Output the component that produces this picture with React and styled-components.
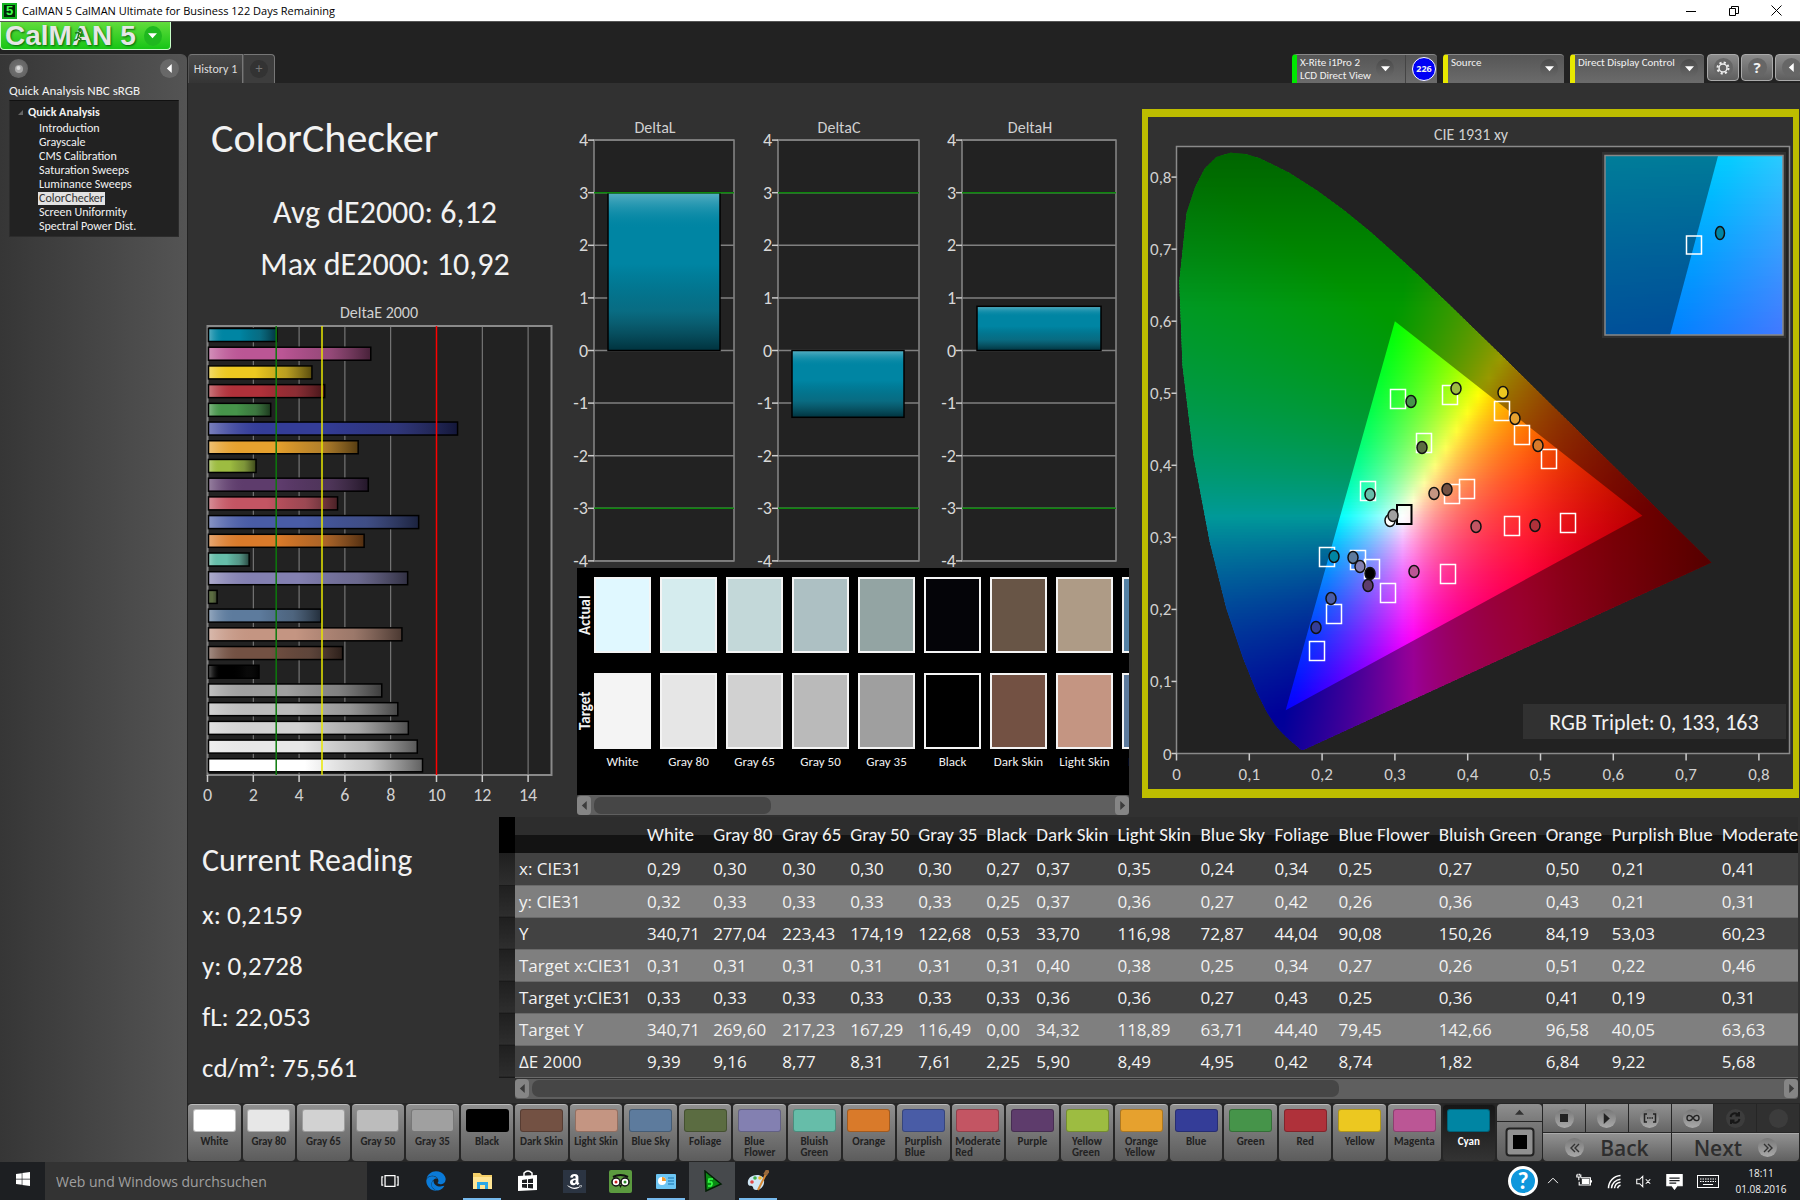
import styled, { createGlobalStyle } from 'styled-components';
import { FaEdge, FaAmazon, FaTripadvisor, FaWindows } from 'react-icons/fa';

const GlobalStyle = createGlobalStyle`
  * {
    box-sizing: border-box;
  }
  body {
    margin: 0;
    background: #222;
    color: #f2f2f2;
    font-family: Carlito, Lato, sans-serif;
  }
  button, select, input {
    font-family: inherit;
    padding: 0;
    border: 0;
    color: inherit;
  }
  h1, h2, p, ul {
    margin: 0;
    padding: 0;
  }
  text {
    font-family: Carlito, Lato, sans-serif;
  }
`;

const COLORS = [
  { name: 'White', color: '#ffffff', actual: '#e0f8ff', target: '#f4f4f4', de: 9.39 },
  { name: 'Gray 80', color: '#e7e7e7', actual: '#d5ecee', target: '#e6e6e6', de: 9.16 },
  { name: 'Gray 65', color: '#d2d2d2', actual: '#c3d8d9', target: '#d1d1d1', de: 8.77 },
  { name: 'Gray 50', color: '#bcbcbc', actual: '#adc0c3', target: '#bababa', de: 8.31 },
  { name: 'Gray 35', color: '#a0a0a0', actual: '#93a4a3', target: '#9f9f9f', de: 7.61 },
  { name: 'Black', color: '#000000', actual: '#040408', target: '#000000', de: 2.25 },
  { name: 'Dark Skin', color: '#735143', actual: '#685546', target: '#735143', de: 5.9 },
  { name: 'Light Skin', color: '#c49582', actual: '#ae9b86', target: '#c49582', de: 8.49 },
  { name: 'Blue Sky', color: '#5d7b9d', actual: '#5582a5', target: '#5d7b9d', de: 4.95 },
  { name: 'Foliage', color: '#5b6c41', de: 0.42 },
  { name: 'Blue Flower', color: '#8380b1', de: 8.74 },
  { name: 'Bluish Green', color: '#66bda9', de: 1.82 },
  { name: 'Orange', color: '#d97a2a', de: 6.84 },
  { name: 'Purplish Blue', color: '#495ca6', de: 9.22 },
  { name: 'Moderate Red', color: '#c35563', de: 5.68 },
  { name: 'Purple', color: '#5e3c6c', de: 7.02 },
  { name: 'Yellow Green', color: '#9dbc41', de: 2.12 },
  { name: 'Orange Yellow', color: '#e6a12e', de: 6.58 },
  { name: 'Blue', color: '#343d98', de: 10.92 },
  { name: 'Green', color: '#46944a', de: 2.76 },
  { name: 'Red', color: '#af313a', de: 5.12 },
  { name: 'Yellow', color: '#ecc820', de: 4.56 },
  { name: 'Magenta', color: '#bb5695', de: 7.13 },
  { name: 'Cyan', color: '#0085a3', de: 3.03 },
];

const colorOf = name => COLORS.find(c => c.name === name).color;

const Page = styled.div`
  min-height: 100vh;
  display: flex;
  flex-direction: column;
  overflow: hidden;
`;

/* ---------- title bar ---------- */

const TitleBar = styled.header`
  height: 22px;
  display: flex;
  align-items: center;
  background: #fff;
  border-bottom: 1px solid #555;
  color: #000;
  font-family: 'Open Sans', sans-serif;
  font-size: 11px;
`;
const AppBadge = styled.span`
  width: 15px;
  height: 16px;
  margin: 0 5px 0 2px;
  border: 2px solid #12b321;
  background: #022806;
  color: #3dff4c;
  font: bold 13px/12px 'Liberation Sans', sans-serif;
  text-align: center;
`;
const WindowButtons = styled.div`
  margin-left: auto;
  padding-right: 2px;
  display: flex;
`;
const WindowButton = styled.button`
  width: 43px;
  height: 20px;
  background: none;
`;

/* ---------- frame ---------- */

const Body = styled.div`
  flex: 1;
  display: grid;
  grid-template-columns: 187px minmax(0, 1fr);
`;
const LeftColumn = styled.div`
  display: flex;
  flex-direction: column;
`;
const Logo = styled.button`
  position: relative;
  width: 171px;
  height: 28px;
  margin-bottom: 4px;
  display: flex;
  align-items: center;
  padding-left: 4px;
  border: 1px solid #c8ffc8;
  border-top: 0;
  border-radius: 0 0 4px 4px;
  background: linear-gradient(#62dc3c, #16c516);
  color: #e6e6e6;
  font: bold 28px/24px 'Liberation Sans', sans-serif;
  text-shadow: 1px 1px 2px #06640a;
`;
const LogoDigit = styled.span`
  margin-left: 8px;
`;
const Runner = styled.svg`
  position: absolute;
  left: 72px;
  top: 6px;
`;
const LogoArrow = styled.span`
  width: 18px;
  height: 20px;
  margin-left: 8px;
  border-radius: 50%;
  background: #1fb81f;
  display: grid;
  place-items: center;
`;

const Sidebar = styled.aside`
  flex: 1;
  padding: 4px 8px 0 9px;
  border-top: 1px solid #555;
  border-radius: 0 6px 0 0;
  background: linear-gradient(90deg, #363636, #545454);
`;
const SidebarTop = styled.div`
  display: flex;
  justify-content: space-between;
`;
const RoundButton = styled.button`
  width: 19px;
  height: 19px;
  flex: none;
  display: grid;
  place-items: center;
  border-radius: 50%;
  background: ${p => (p.$soft ? '#686868' : 'radial-gradient(#777, #5b5b5b)')};
`;
const SidebarTitle = styled.h2`
  margin-top: 4px;
  font-size: 13px;
  font-weight: 400;
  line-height: 18px;
`;
const Tree = styled.nav`
  min-height: 137px;
  padding: 4px 0 4px 8px;
  background: #222;
  border: 1px solid #2c2c2c;
  border-top-color: #111;
`;
const TreeRoot = styled.div`
  display: flex;
  align-items: center;
  gap: 5px;
  font-size: 12px;
  font-weight: 700;
  line-height: 15px;
`;
const TreeList = styled.ul`
  margin-left: 20px;
  list-style: none;
`;
const TreeLink = styled.a`
  display: inline-block;
  padding: 0 1px;
  font-size: 12px;
  line-height: 13px;
  text-decoration: none;
  background: ${p => (p.$active ? '#e2e2e2' : 'none')};
  color: ${p => (p.$active ? '#333' : '#f2f2f2')};
`;
const TreeItem = styled.li`
  height: 14px;
  line-height: 13px;
`;

const MainColumn = styled.div`
  display: flex;
  flex-direction: column;
  border-left: 1px solid #222;
`;
const TopBar = styled.div`
  height: 61px;
  display: flex;
  align-items: flex-end;
`;
const Tab = styled.button`
  height: 29px;
  width: ${p => (p.$small ? 32 : 55)}px;
  border: 1px solid #777;
  border-bottom: 0;
  border-left-color: #555;
  border-radius: ${p => (p.$small ? '0 4px 0 0' : '4px 0 0 0')};
  background: ${p => (p.$small ? '#3d3d3d' : 'linear-gradient(#4a4a4a, #353535)')};
  color: ${p => (p.$small ? '#777' : '#ddd')};
  font-size: 12px;
`;
const TabDisc = styled.span`
  display: inline-block;
  width: 18px;
  height: 18px;
  border-radius: 50%;
  background: #333;
  font-size: 14px;
  line-height: 18px;
`;
const Devices = styled.div`
  margin-left: auto;
  display: flex;
  gap: 6px;
`;
const Device = styled.div`
  width: ${p => p.$width}px;
  height: 29px;
  position: relative;
  display: flex;
  align-items: center;
  border-left: 5px solid ${p => p.$state};
  border-top: 1px solid #888;
  border-radius: 4px 4px 0 0;
  background: linear-gradient(#565656, #6b6b6b);
`;
const DeviceSelect = styled.select`
  width: 100%;
  height: 28px;
  padding: 0 24px 12px 3px;
  appearance: none;
  background: none;
  color: #f2f2f2;
  font-size: 11px;
  line-height: 14px;
`;
const DeviceText = styled.button`
  flex: 1;
  padding-left: 3px;
  background: none;
  font-size: 11px;
  line-height: 13px;
  text-align: left;
  white-space: nowrap;
`;
const Drop = styled.span`
  position: absolute;
  right: ${p => p.$right}px;
  top: 4px;
  width: 18px;
  height: 19px;
  display: grid;
  place-items: center;
  border-radius: 50%;
  background: linear-gradient(#4a4a4a, #686868);
  pointer-events: none;
`;
const Counter = styled.span`
  width: 24px;
  height: 24px;
  margin-right: 1px;
  border: 1px solid #fff;
  border-radius: 50%;
  background: #0000f5;
  font: bold 9px/22px 'Open Sans', sans-serif;
  text-align: center;
`;
const Separator = styled.span`
  width: 1px;
  height: 28px;
  margin: 0 6px 0 0;
  background: #444;
`;
const ToolButtons = styled.div`
  display: flex;
  gap: 2px;
  margin: 0 -7px 2px 3px;
`;
const ToolButton = styled.button`
  width: 32px;
  height: 27px;
  display: grid;
  place-items: center;
  border: 1px solid #aaa;
  border-radius: 4px;
  background: linear-gradient(#8b8b8b, #5e5e5e);
`;
const ToolDisc = styled.span`
  width: 19px;
  height: 19px;
  display: grid;
  place-items: center;
  border-radius: 50%;
  background: #666;
  font: bold 15px/19px 'Open Sans', sans-serif;
`;

/* ---------- workspace ---------- */

const Workspace = styled.main`
  flex: 1;
  background: #313131;
`;
const Charts = styled.section`
  display: grid;
  grid-template-columns: 389fr 552fr 670fr;
  padding-right: 1px;
`;
const Heading = styled.h1`
  margin: 27px 0 0 23px;
  font-size: 42px;
  font-weight: 400;
  line-height: 56px;
`;
const Stats = styled.div`
  padding: 21px 0 8px 5px;
  text-align: center;
  font-size: 32px;
  line-height: 52px;
`;
const Drawing = styled.svg`
  display: block;
  width: 100%;
  overflow: visible;
`;
const MiddleColumn = styled.div`
  min-width: 0;
`;
const SwatchPanel = styled.div`
  height: 227px;
  padding-top: 9px;
  overflow: hidden;
  background: #000;
`;
const SwatchRow = styled.div`
  display: flex;
  gap: 9px;
  margin-bottom: ${p => p.$gap}px;
`;
const SideLabel = styled.span`
  width: 17px;
  margin-right: -9px;
  flex: none;
  writing-mode: vertical-rl;
  transform: rotate(180deg);
  text-align: center;
  font-size: 15px;
  font-weight: 700;
  line-height: 17px;
`;
const Swatch = styled.div`
  flex: none;
  width: 57px;
  height: 76px;
  border: 2px solid #f4f4f4;
  background: ${p => p.$color};
`;
const SwatchName = styled.span`
  flex: none;
  width: 57px;
  font-size: 13px;
  line-height: 18px;
  text-align: center;
  white-space: nowrap;
`;
const ScrollTrack = styled.div`
  height: 20px;
  display: flex;
  align-items: center;
  justify-content: space-between;
  border-radius: 3px;
  background: #5f5f5f;
`;
const ScrollThumb = styled.div`
  width: ${p => p.$size};
  height: 17px;
  margin: 0 auto 0 3px;
  border-radius: 7px;
  background: #464646;
`;
const ScrollButton = styled.button`
  width: 14px;
  height: 19px;
  display: grid;
  place-items: center;
  border-radius: 4px;
  background: #858585;
`;
const CiePanel = styled.div`
  margin: 26px 0 0 13px;
  align-self: start;
  border: solid #bdbd00;
  border-width: 8px 6px 9px;
`;

const Readings = styled.section`
  display: flex;
  margin-top: 2px;
  padding-right: 2px;
`;
const Current = styled.div`
  width: 311px;
  flex: none;
  padding: 16px 0 0 14px;
`;
const CurrentTitle = styled.h2`
  font-size: 32px;
  font-weight: 400;
  line-height: 56px;
`;
const CurrentLine = styled.p`
  font-size: 27px;
  line-height: 51px;
`;
const TableArea = styled.div`
  flex: 1;
  min-width: 0;
  overflow: hidden;
`;
const DataTable = styled.table`
  width: 100%;
  table-layout: fixed;
  border-collapse: collapse;
  font-family: 'Open Sans', sans-serif;
  font-size: 17px;
`;
const HeadCell = styled.th`
  height: 36px;
  padding: 0 0 0 4px;
  overflow: hidden;
  background: linear-gradient(#2d2d2d 50%, #131313 50%);
  font: 400 19px/24px Carlito, Lato, sans-serif;
  text-align: left;
  white-space: nowrap;
`;
const Corner = styled.th`
  background: #000;
`;
const Grip = styled.td`
  padding: 0;
  background: linear-gradient(#1f1f1f, #2e2e2e);
  border-bottom: 1px solid #1a1a1a;
`;
const Row = styled.tr`
  height: 32px;
  background: ${p => (p.$alt ? '#7f7f7f' : '#424242')};
`;
const Cell = styled.td`
  padding: 0 0 0 4px;
  border-bottom: 1px solid #6a6a6a;
  font-weight: 400;
  text-align: left;
  white-space: nowrap;
`;
const TableScroll = styled.div`
  margin: 1px 0 0 16px;
`;

/* ---------- bottom bar ---------- */

const BottomBar = styled.footer`
  height: 59px;
  padding: 1px 1px 1px 0;
  display: flex;
  gap: 2px;
  background: #262626;
`;
const PatchButton = styled.button`
  flex: 1 1 0;
  min-width: 0;
  height: 57px;
  padding-top: 4px;
  display: flex;
  flex-direction: column;
  align-items: center;
  gap: 4px;
  border-top: 1px solid ${p => (p.$active ? '#222' : '#bbb')};
  border-radius: 4px;
  background: ${p => (p.$active ? 'linear-gradient(#161616, #333)' : 'linear-gradient(#8f8f8f, #5c5c5c)')};
  color: ${p => (p.$active ? '#fff' : '#222')};
  font-size: 11px;
  font-weight: 700;
  line-height: 11px;
  text-align: left;
`;
const PatchColor = styled.span`
  width: 43px;
  height: 23px;
  flex: none;
  border-radius: 3px;
  border: 1px solid rgba(0, 0, 0, 0.25);
  background: ${p => p.$color};
`;
const PatchName = styled.span`
  width: ${p => (p.$wrap ? 'min-content' : 'auto')};
  white-space: ${p => (p.$wrap ? 'normal' : 'nowrap')};
`;
const WindowControl = styled.div`
  width: 45px;
  flex: none;
  display: flex;
  flex-direction: column;
  gap: 1px;
`;
const UpButton = styled.button`
  height: 17px;
  display: grid;
  place-items: center;
  border-radius: 4px 4px 0 0;
  background: linear-gradient(#8f8f8f, #7a7a7a);
`;
const PatternButton = styled.button`
  flex: 1;
  display: grid;
  place-items: center;
  border-radius: 0 0 4px 4px;
  background: linear-gradient(#7a7a7a, #5c5c5c);
`;
const Transport = styled.div`
  width: 256px;
  flex: none;
  margin-left: -1px;
  display: grid;
  grid-template-columns: repeat(6, 1fr);
  grid-template-rows: 28px 28px;
  gap: 1px;
`;
const TransportButton = styled.button`
  display: grid;
  place-items: center;
  background: ${p => (p.$off ? '#303030' : 'linear-gradient(#919191, #656565)')};
`;
const Disc = styled.span`
  width: 19px;
  height: 19px;
  display: grid;
  place-items: center;
  border-radius: 50%;
  background: ${p => (p.$off ? '#3c3c3c' : 'linear-gradient(#777, #aaa)')};
`;
const StepButton = styled.button`
  grid-column: span 3;
  display: flex;
  align-items: center;
  justify-content: center;
  gap: 16px;
  border-top: 1px solid #aaa;
  border-radius: ${p => (p.$right ? '0 0 4px 0' : '0 0 0 4px')};
  background: linear-gradient(#919191, #606060);
  color: #2e2e2e;
  font: 600 21px/24px 'Open Sans', sans-serif;
`;

/* ---------- task bar ---------- */

const TaskBar = styled.div`
  height: 38px;
  display: flex;
  align-items: center;
  background: #1d1f22;
  font-family: 'Open Sans', sans-serif;
`;
const StartButton = styled.button`
  width: 45px;
  height: 38px;
  background: none;
  color: #fff;
`;
const Search = styled.input`
  width: 322px;
  height: 38px;
  padding-left: 11px;
  background: #333;
  font-size: 14px;
  &::placeholder {
    color: #a0a0a0;
    opacity: 1;
  }
`;
const TaskButton = styled.button`
  width: 46px;
  height: 38px;
  display: grid;
  place-items: center;
  background: ${p => (p.$active ? '#46494c' : 'none')};
  position: relative;
  &::after {
    content: '';
    display: ${p => (p.$running ? 'block' : 'none')};
    position: absolute;
    left: 4px;
    right: 4px;
    bottom: 0;
    height: 2px;
    background: #76b9ed;
  }
`;
const Tray = styled.div`
  margin-left: auto;
  display: flex;
  align-items: center;
`;
const TrayButton = styled.button`
  width: ${p => p.$width || 30}px;
  height: 38px;
  display: grid;
  place-items: center;
  background: none;
`;
const Clock = styled.div`
  width: 70px;
  margin-right: 4px;
  font-size: 10px;
  line-height: 16px;
  text-align: center;
`;

const Arrow = ({ dir = 'down', color = '#fff', size = 9 }) => {
  const turn = { down: 0, left: 90, up: 180, right: 270 }[dir];
  return (
    <svg width={size} height={size} viewBox="0 0 10 10" aria-hidden="true">
      <path d="M0 2.5H10L5 8Z" fill={color} transform={`rotate(${turn} 5 5)`} />
    </svg>
  );
};

/* ---------- charts ---------- */

const BarFill = ({ id, color, vertical }) => (
  <linearGradient id={`${id}-base`} x2={vertical ? 0 : 1} y2={vertical ? 1 : 0}>
    <stop offset="0" stopColor="#fff" stopOpacity="0.35" />
    <stop offset="0.23" stopColor={color} stopOpacity="0" />
    <stop offset="0.45" stopColor="#000" stopOpacity="0" />
    <stop offset="0.75" stopColor="#222" stopOpacity="0.25" />
    <stop offset="1" stopColor="#000" stopOpacity="0.62" />
  </linearGradient>
);

const DeltaEChart = () => {
  const left = 19.5;
  const unit = 22.9;
  const top = 27;
  const bottom = 476;
  const pitch = (bottom - top) / COLORS.length;
  return (
    <Drawing viewBox="0 0 389 510" role="img" aria-label="DeltaE 2000">
      <defs>
        {COLORS.map((c, i) => (
          <BarFill key={c.name} id={`de${i}`} color={c.color} />
        ))}
      </defs>
      <text x="191" y="19" fontSize="16" fill="#d0d0d0" textAnchor="middle">DeltaE 2000</text>
      <rect x={left} y={top} width="344" height={bottom - top} fill="#222" stroke="#8a8a8a" strokeWidth="2" />
      {[0, 2, 4, 6, 8, 10, 12, 14].map(v => (
        <g key={v}>
          <line x1={left + v * unit} x2={left + v * unit} y1={top} y2={bottom} stroke="#858585" />
          <line x1={left + v * unit} x2={left + v * unit} y1={bottom} y2={bottom + 7} stroke="#ccc" strokeWidth="1.5" />
          <text x={left + v * unit} y="502" fontSize="18" fill="#d0d0d0" textAnchor="middle">{v}</text>
        </g>
      ))}
      {[...COLORS].reverse().map((c, i) => {
        const box = { x: left + 1, y: top + i * pitch + 2.5, width: c.de * unit - 1, height: 13 };
        return (
          <g key={c.name}>
            <rect {...box} fill={c.color} />
            <rect {...box} fill={`url(#de${COLORS.length - 1 - i}-base)`} stroke="#000" strokeWidth="1.5" />
          </g>
        );
      })}
      <line x1={left + 3 * unit} x2={left + 3 * unit} y1={top} y2={bottom} stroke="#0c7a0c" strokeWidth="1.5" />
      <line x1={left + 5 * unit} x2={left + 5 * unit} y1={top} y2={bottom} stroke="#e8e800" strokeWidth="1.5" />
      <line x1={left + 10 * unit} x2={left + 10 * unit} y1={top} y2={bottom} stroke="#f00" strokeWidth="1.5" />
    </Drawing>
  );
};

const DELTAS = [
  { name: 'DeltaL', x: 17, width: 140, title: 78, bar: [31, 112], value: 3 },
  { name: 'DeltaC', x: 201, width: 141, title: 262, bar: [215, 112], value: -1.27 },
  { name: 'DeltaH', x: 385, width: 154, title: 453, bar: [400, 124], value: 0.84 },
];

const DeltaCharts = () => {
  const zero = 267.5;
  const unit = 52.6;
  return (
    <Drawing viewBox="0 0 552 485" role="img" aria-label="DeltaL, DeltaC and DeltaH">
      <defs>
        <BarFill id="delta" color="#0085a3" vertical />
      </defs>
      {DELTAS.map(d => {
        const box = {
          x: d.bar[0],
          y: d.value > 0 ? zero - d.value * unit : zero,
          width: d.bar[1],
          height: Math.abs(d.value) * unit,
        };
        return (
          <g key={d.name}>
            <text x={d.title} y="50" fontSize="16" fill="#d0d0d0" textAnchor="middle">{d.name}</text>
            <rect x={d.x} y={zero - 4 * unit} width={d.width} height={8 * unit} fill="#222" stroke="#888" strokeWidth="1.5" />
            {[4, 3, 2, 1, 0, -1, -2, -3, -4].map(v => (
              <g key={v}>
                <line x1={d.x} x2={d.x + d.width} y1={zero - v * unit} y2={zero - v * unit} stroke="#808080" strokeWidth="1.5" />
                <line x1={d.x - 6} x2={d.x} y1={zero - v * unit} y2={zero - v * unit} stroke="#ccc" strokeWidth="1.5" />
                <text x={d.x - 6} y={zero - v * unit + 6} fontSize="18" fill="#d8d8d8" textAnchor="end">{v}</text>
              </g>
            ))}
            <rect {...box} fill="#0085a3" />
            <rect {...box} fill="url(#delta-base)" stroke="#000" strokeWidth="1.5" />
            {[3, -3].map(v => (
              <line key={v} x1={d.x} x2={d.x + d.width} y1={zero - v * unit} y2={zero - v * unit} stroke="#0d870d" strokeWidth="1.5" />
            ))}
          </g>
        );
      })}
    </Drawing>
  );
};

// CIE 1931 spectral locus, 380nm to 700nm
const LOCUS = [
  [0.1741, 0.005], [0.1738, 0.0049], [0.1714, 0.0051], [0.1689, 0.0069], [0.1644, 0.0109], [0.1566, 0.0177],
  [0.151, 0.0227], [0.144, 0.0297], [0.1355, 0.0399], [0.1241, 0.0578], [0.1096, 0.0868], [0.0913, 0.1327],
  [0.0687, 0.2007], [0.0454, 0.295], [0.0235, 0.4127], [0.0082, 0.5384], [0.0039, 0.6548], [0.0139, 0.7502],
  [0.0256, 0.786], [0.0389, 0.812], [0.055, 0.828], [0.0743, 0.8338], [0.0943, 0.832], [0.1142, 0.8262],
  [0.1547, 0.8059], [0.1929, 0.7816], [0.2296, 0.7543], [0.2658, 0.7243], [0.3016, 0.6923], [0.3373, 0.6589],
  [0.3731, 0.6245], [0.4087, 0.5896], [0.4441, 0.5547], [0.4788, 0.5202], [0.5125, 0.4866], [0.5448, 0.4544],
  [0.5752, 0.4242], [0.6029, 0.3965], [0.627, 0.3725], [0.6658, 0.334], [0.6915, 0.3083], [0.714, 0.2859],
  [0.7347, 0.2653],
];
const SRGB = [[0.64, 0.33], [0.3, 0.6], [0.15, 0.06]];

const chroma = (x, y) => {
  const yy = Math.max(y, 0.001);
  const X = x / yy;
  const Z = (1 - x - yy) / yy;
  const rgb = [
    3.2406 * X - 1.5372 - 0.4986 * Z,
    -0.9689 * X + 1.8758 + 0.0415 * Z,
    0.0557 * X - 0.204 + 1.057 * Z,
  ].map(v => Math.max(v, 0));
  const max = Math.max(...rgb);
  const fade = (1 - Math.max(0, x - 0.48) * 1.75) * (1 - Math.max(0, y - 0.62) * 1.6);
  return `rgb(${rgb.map(v => Math.round((v / max) * 255 * fade)).join(',')})`;
};

// Paints a chromaticity area as thin strips, each with its own horizontal gradient
const Field = ({ id, px, py, width, height, x0, x1, y0, y1, step, stops }) => {
  const rows = Array.from({ length: Math.ceil(height / step) }, (_, i) => i);
  const cols = Array.from({ length: stops + 1 }, (_, i) => i / stops);
  return rows.map(r => {
    const y = y1 - ((r + 0.5) * step * (y1 - y0)) / height;
    return (
      <g key={r}>
        <linearGradient id={`${id}${r}`}>
          {cols.map(c => (
            <stop key={c} offset={c} stopColor={chroma(x0 + c * (x1 - x0), y)} />
          ))}
        </linearGradient>
        <rect x={px} y={py + r * step} width={width} height={Math.min(step + 1, height - r * step)} fill={`url(#${id}${r})`} />
      </g>
    );
  });
};

const TARGETS = [
  [1398, 399], [1450, 395], [1502, 411], [1522, 435], [1549, 459], [1424, 443], [1368, 491], [1452, 494],
  [1467, 489], [1512, 526], [1568, 523], [1327, 557], [1358, 560], [1372, 569], [1388, 593], [1448, 574],
  [1334, 614], [1317, 651],
];
const MEASURED = [
  ['Green', 1411, 401], ['Yellow Green', 1456, 388], ['Yellow', 1503, 392], ['Orange Yellow', 1515, 418],
  ['Orange', 1538, 445], ['Foliage', 1422, 447], ['Bluish Green', 1370, 494], ['Light Skin', 1434, 493],
  ['Dark Skin', 1447, 489], ['White', 1390, 520], ['Gray 35', 1393, 515], ['Moderate Red', 1476, 526],
  ['Red', 1535, 525], ['Cyan', 1334, 556], ['Blue Sky', 1353, 557], ['Blue Flower', 1360, 566],
  ['Purple', 1368, 585], ['Black', 1370, 573], ['Magenta', 1414, 571], ['Purplish Blue', 1331, 598],
  ['Blue', 1316, 627],
];

const CieChart = () => {
  const ox = 1176.5;
  const oy = 753.5;
  const ux = 728;
  const uy = 720.5;
  const path = pts => `M${pts.map(([x, y]) => `${(ox + x * ux).toFixed(1)} ${(oy - y * uy).toFixed(1)}`).join('L')}Z`;
  // magnified area round the selected target
  const cx = 0.2075;
  const cy = 0.27;
  const zoom = 3060;
  const inset = {
    x0: cx - 89 / zoom, x1: cx + 89 / zoom, y0: cy - 90 / zoom, y1: cy + 90 / zoom,
  };
  return (
    <Drawing viewBox="1148 117 645 672" role="img" aria-label="CIE 1931 xy">
      <defs>
        <clipPath id="locus"><path d={path(LOCUS)} /></clipPath>
      </defs>
      <text x="1471" y="140" fontSize="16" fill="#d0d0d0" textAnchor="middle">CIE 1931 xy</text>
      <rect x={ox} y="146.5" width="613" height="607" fill="#222" stroke="#8a8a8a" strokeWidth="1.5" />
      {[0, 1, 2, 3, 4, 5, 6, 7, 8].map(v => {
        const label = v ? `0,${v}` : '0';
        return (
          <g key={v}>
            <line x1={ox - 5} x2={ox} y1={oy - v * uy / 10} y2={oy - v * uy / 10} stroke="#ccc" strokeWidth="1.5" />
            <line x1={ox + v * ux / 10} x2={ox + v * ux / 10} y1={oy} y2={oy + 7} stroke="#ccc" strokeWidth="1.5" />
            <text x={ox - 5} y={oy - v * uy / 10 + 6} fontSize="17" fill="#d0d0d0" textAnchor="end">{label}</text>
            <text x={ox + v * ux / 10} y="780" fontSize="17" fill="#d0d0d0" textAnchor="middle">{label}</text>
          </g>
        );
      })}
      <g clipPath="url(#locus)">
        <Field id="cie" px={ox} py={oy - 0.84 * uy} width={0.74 * ux} height={0.84 * uy}
          x0={0} x1={0.74} y0={0} y1={0.84} step={3} stops={50} />
      </g>
      <path d={path(LOCUS) + path(SRGB)} fillRule="evenodd" fill="#000" fillOpacity="0.4" />

      <rect x="1602" y="152" width="184" height="186" fill="#313131" />
      <Field id="inset" px={1605} py={156} width={178} height={179} {...inset} step={3} stops={10} />
      <path d="M1605 156H1718L1670 335H1605Z" fillOpacity="0.4" />
      <rect x="1605" y="155.5" width="178" height="179.5" fill="none" stroke="#888" strokeWidth="1.5" />
      <rect x="1686.5" y="236" width="15" height="18" fill="none" stroke="#fff" strokeWidth="1.5" />
      <ellipse cx="1720" cy="233" rx="4.5" ry="6.5" fill="#0085a3" stroke="#111" strokeWidth="1.5" />

      {TARGETS.map(([x, y]) => (
        <rect key={`${x}-${y}`} x={x - 7.5} y={y - 9.5} width="15" height="19" fill="none" stroke="#fff" strokeWidth="1.5" />
      ))}
      <rect x="1397" y="505" width="14.5" height="19" fill="#fff" fillOpacity="0.6" stroke="#000" strokeWidth="2" />
      {MEASURED.map(([name, x, y]) => (
        <ellipse key={name} cx={x} cy={y + 0.5} rx="5" ry="6" fill={colorOf(name)} stroke="#111" strokeWidth="1.5" />
      ))}

      <rect x="1523" y="704" width="263" height="35" fill="#313131" />
      <text x="1654" y="730" fontSize="22" fill="#f2f2f2" textAnchor="middle">RGB Triplet: 0, 133, 163</text>
    </Drawing>
  );
};

/* ---------- data table ---------- */

const COLUMNS = [
  ['White', 66], ['Gray 80', 69], ['Gray 65', 68], ['Gray 50', 68], ['Gray 35', 68], ['Black', 50],
  ['Dark Skin', 81], ['Light Skin', 83], ['Blue Sky', 74], ['Foliage', 64], ['Blue Flower', 100],
  ['Bluish Green', 107], ['Orange', 66], ['Purplish Blue', 110], ['Moderate', 80],
];
const ROWS = [
  ['x: CIE31', '0,29 0,30 0,30 0,30 0,30 0,27 0,37 0,35 0,24 0,34 0,25 0,27 0,50 0,21 0,41'],
  ['y: CIE31', '0,32 0,33 0,33 0,33 0,33 0,25 0,37 0,36 0,27 0,42 0,26 0,36 0,43 0,21 0,31'],
  ['Y', '340,71 277,04 223,43 174,19 122,68 0,53 33,70 116,98 72,87 44,04 90,08 150,26 84,19 53,03 60,23'],
  ['Target x:CIE31', '0,31 0,31 0,31 0,31 0,31 0,31 0,40 0,38 0,25 0,34 0,27 0,26 0,51 0,22 0,46'],
  ['Target y:CIE31', '0,33 0,33 0,33 0,33 0,33 0,33 0,36 0,36 0,27 0,43 0,25 0,36 0,41 0,19 0,31'],
  ['Target Y', '340,71 269,60 217,23 167,29 116,49 0,00 34,32 118,89 63,71 44,40 79,45 142,66 96,58 40,05 63,63'],
  ['ΔE 2000', '9,39 9,16 8,77 8,31 7,61 2,25 5,90 8,49 4,95 0,42 8,74 1,82 6,84 9,22 5,68'],
];

const Scrollbar = ({ size }) => (
  <ScrollTrack>
    <ScrollButton aria-label="Scroll left"><Arrow dir="left" color="#3c3c3c" /></ScrollButton>
    <ScrollThumb $size={size} />
    <ScrollButton aria-label="Scroll right"><Arrow dir="right" color="#3c3c3c" /></ScrollButton>
  </ScrollTrack>
);

const ReadingsTable = () => (
  <TableArea>
    <DataTable>
      <colgroup>
        <col width="16" />
        <col width="128" />
        {COLUMNS.map(([name, width]) => <col key={name} width={width} />)}
      </colgroup>
      <thead>
        <tr>
          <Corner />
          <HeadCell />
          {COLUMNS.map(([name]) => <HeadCell key={name}>{name}</HeadCell>)}
        </tr>
      </thead>
      <tbody>
        {ROWS.map(([label, values], i) => (
          <Row key={label} $alt={i % 2 === 1}>
            <Grip />
            <Cell as="th" scope="row">{label}</Cell>
            {values.split(' ').map((v, n) => <Cell key={n}>{v}</Cell>)}
          </Row>
        ))}
      </tbody>
    </DataTable>
    <TableScroll><Scrollbar size="807px" /></TableScroll>
  </TableArea>
);

const PAGES = ['Introduction', 'Grayscale', 'CMS Calibration', 'Saturation Sweeps', 'Luminance Sweeps', 'ColorChecker', 'Screen Uniformity', 'Spectral Power Dist.'];

const Glyph = ({ children, size = 18 }) => (
  <svg width={size} height={size} viewBox="0 0 20 20" fill="none" stroke="#fff" strokeWidth="1.4" aria-hidden="true">
    {children}
  </svg>
);

export default function App() {
  return (
    <Page>
      <GlobalStyle />
      <TitleBar>
        <AppBadge>5</AppBadge>
        CalMAN 5 CalMAN Ultimate for Business 122 Days Remaining
        <WindowButtons>
          <WindowButton aria-label="Minimize">
            <svg width="10" height="10" stroke="#000"><path d="M0 5.5H10" /></svg>
          </WindowButton>
          <WindowButton aria-label="Restore">
            <svg width="10" height="10" stroke="#000" fill="none"><path d="M.5 2.5h6v7h-6zM2.5 2.5v-2h7v7h-3" /></svg>
          </WindowButton>
          <WindowButton aria-label="Close">
            <svg width="11" height="11" stroke="#000"><path d="M.5 .5l10 10M10.500 .5l-10 10" /></svg>
          </WindowButton>
        </WindowButtons>
      </TitleBar>

      <Body>
        <LeftColumn>
          <Logo aria-label="CalMAN 5 menu">
            CalMAN<LogoDigit>5</LogoDigit>
            <Runner width="12" height="15" viewBox="0 0 12 15" fill="none" stroke="#1d7d1d" strokeWidth="1.4">
              <circle cx="7" cy="2" r="1.2" fill="#1d7d1d" />
              <path d="M2 5L5.500 4.500L8 7H10.500M6 5L5 9L8 11L7 14M5 9L4 11.500L1 12.500" />
            </Runner>
            <LogoArrow><Arrow /></LogoArrow>
          </Logo>
          <Sidebar>
            <SidebarTop>
              <RoundButton aria-label="Record">
                <svg width="10" height="10"><circle cx="5" cy="5" r="4" fill="#aaa" /><circle cx="4.500" cy="4" r="2" fill="#ddd" /></svg>
              </RoundButton>
              <RoundButton $soft aria-label="Collapse"><Arrow dir="left" /></RoundButton>
            </SidebarTop>
            <SidebarTitle>Quick Analysis NBC sRGB</SidebarTitle>
            <Tree>
              <TreeRoot>
                <svg width="5" height="5"><path d="M5 0V5H0Z" fill="#666" /></svg>
                Quick Analysis
              </TreeRoot>
              <TreeList>
                {PAGES.map(page => (
                  <TreeItem key={page}>
                    <TreeLink href="#" $active={page === 'ColorChecker'}>{page}</TreeLink>
                  </TreeItem>
                ))}
              </TreeList>
            </Tree>
          </Sidebar>
        </LeftColumn>

        <MainColumn>
          <TopBar>
            <Tab>History 1</Tab>
            <Tab $small aria-label="Add history"><TabDisc>+</TabDisc></Tab>
            <Devices>
              <Device $width={145} $state="#00e800">
                <DeviceText>X-Rite i1Pro 2<br />LCD Direct View</DeviceText>
                <Drop $right={43}><Arrow /></Drop>
                <Separator />
                <Counter>226</Counter>
              </Device>
              <Device $width={121} $state="#e8e800">
                <DeviceSelect aria-label="Source"><option>Source</option></DeviceSelect>
                <Drop $right={6}><Arrow /></Drop>
              </Device>
              <Device $width={134} $state="#e8e800">
                <DeviceSelect aria-label="Display control"><option>Direct Display Control</option></DeviceSelect>
                <Drop $right={6}><Arrow /></Drop>
              </Device>
            </Devices>
            <ToolButtons>
              <ToolButton aria-label="Settings">
                <ToolDisc>
                  <svg width="14" height="14" viewBox="-7 -7 14 14" fill="none" stroke="#eee">
                    <circle r="4" strokeWidth="1.5" />
                    <circle r="5.500" strokeWidth="2" strokeDasharray="2.160 2.160" />
                  </svg>
                </ToolDisc>
              </ToolButton>
              <ToolButton aria-label="Help"><ToolDisc>?</ToolDisc></ToolButton>
              <ToolButton aria-label="Collapse panel"><ToolDisc><Arrow dir="left" /></ToolDisc></ToolButton>
            </ToolButtons>
          </TopBar>

          <Workspace>
            <Charts>
              <div>
                <Heading>ColorChecker</Heading>
                <Stats>
                  <p>Avg dE2000: 6,12</p>
                  <p>Max dE2000: 10,92</p>
                </Stats>
                <DeltaEChart />
              </div>
              <MiddleColumn>
                <DeltaCharts />
                <SwatchPanel>
                  <SwatchRow $gap={20}>
                    <SideLabel>Actual</SideLabel>
                    {COLORS.slice(0, 9).map(c => <Swatch key={c.name} $color={c.actual} />)}
                  </SwatchRow>
                  <SwatchRow $gap={4}>
                    <SideLabel>Target</SideLabel>
                    {COLORS.slice(0, 9).map(c => <Swatch key={c.name} $color={c.target} />)}
                  </SwatchRow>
                  <SwatchRow $gap={0}>
                    <SideLabel />
                    {COLORS.slice(0, 9).map(c => <SwatchName key={c.name}>{c.name}</SwatchName>)}
                  </SwatchRow>
                </SwatchPanel>
                <Scrollbar size="177px" />
              </MiddleColumn>
              <CiePanel>
                <CieChart />
              </CiePanel>
            </Charts>
            <Readings>
              <Current>
                <CurrentTitle>Current Reading</CurrentTitle>
                <CurrentLine>x: 0,2159</CurrentLine>
                <CurrentLine>y: 0,2728</CurrentLine>
                <CurrentLine>fL: 22,053</CurrentLine>
                <CurrentLine>cd/m²: 75,561</CurrentLine>
              </Current>
              <ReadingsTable />
            </Readings>
          </Workspace>

          <BottomBar>
            {COLORS.map(c => (
              <PatchButton key={c.name} $active={c.name === 'Cyan'}>
                <PatchColor $color={c.color} />
                <PatchName $wrap={c.name.length > 10}>{c.name}</PatchName>
              </PatchButton>
            ))}
            <WindowControl>
              <UpButton aria-label="More patterns"><Arrow dir="up" color="#333" /></UpButton>
              <PatternButton aria-label="Pattern window">
                <svg width="30" height="30">
                  <rect x="1.500" y="1.500" width="27" height="27" rx="3" fill="#909090" stroke="#222" strokeWidth="2" />
                  <rect x="8" y="8" width="14" height="14" fill="#000" />
                </svg>
              </PatternButton>
            </WindowControl>
            <Transport>
              <TransportButton aria-label="Stop"><Disc><svg width="8" height="8"><rect width="8" height="8" fill="#222" /></svg></Disc></TransportButton>
              <TransportButton aria-label="Play"><Disc><Arrow dir="right" color="#222" size={11} /></Disc></TransportButton>
              <TransportButton aria-label="Read series">
                <Disc>
                  <svg width="14" height="10" fill="none" stroke="#222" strokeWidth="1.5">
                    <path d="M4 1H1.500V9H4M10 1H12.500V9H10M4 5H5.500M6.300 5H7.700M8.500 5H10" />
                  </svg>
                </Disc>
              </TransportButton>
              <TransportButton aria-label="Read continuously">
                <Disc>
                  <svg width="14" height="8" fill="none" stroke="#222" strokeWidth="1.4">
                    <path d="M7 4C5 1 1 0 1 4S5 7 7 4S13 0 13 4S9 7 7 4Z" />
                  </svg>
                </Disc>
              </TransportButton>
              <TransportButton $off aria-label="Refresh">
                <Disc $off>
                  <svg width="12" height="12" fill="none" stroke="#171717" strokeWidth="2">
                    <path d="M1.500 5A4.500 4.500 0 0 1 9 2.500M10.500 7A4.500 4.500 0 0 1 3 9.500M10 0V3.500H6.500M2 12V8.500H5.500" />
                  </svg>
                </Disc>
              </TransportButton>
              <TransportButton $off aria-label="Idle"><Disc $off /></TransportButton>
              <StepButton>
                <Disc><svg width="10" height="10" fill="none" stroke="#333" strokeWidth="1.4"><path d="M5 1L1 5L5 9M9 1L5 5L9 9" /></svg></Disc>
                Back
              </StepButton>
              <StepButton $right>
                Next
                <Disc><svg width="10" height="10" fill="none" stroke="#333" strokeWidth="1.4"><path d="M1 1L5 5L1 9M5 1L9 5L5 9" /></svg></Disc>
              </StepButton>
            </Transport>
          </BottomBar>
        </MainColumn>
      </Body>

      <TaskBar>
        <StartButton aria-label="Start"><FaWindows size={16} /></StartButton>
        <Search aria-label="Search" placeholder="Web und Windows durchsuchen" />
        <TaskButton aria-label="Task view">
          <Glyph><path d="M4.500 4H15.500V16H4.500ZM2.500 5.500H1V14.500H2.500M17.500 5.500H19V14.500H17.500" /></Glyph>
        </TaskButton>
        <TaskButton aria-label="Edge"><FaEdge size={20} color="#0a7ad8" /></TaskButton>
        <TaskButton $running aria-label="Explorer">
          <svg width="21" height="18">
            <path d="M1 1H8L10 3H20V17H1Z" fill="#f5d069" />
            <path d="M1 5H20V17H1Z" fill="#ffe595" />
            <path d="M5 17V10H16V17H13V13H8V17Z" fill="#2aa8e8" />
          </svg>
        </TaskButton>
        <TaskButton aria-label="Store">
          <svg width="20" height="22">
            <path d="M6 6V3Q10-1 14 3V6" fill="none" stroke="#fff" strokeWidth="1.500" />
            <path d="M0 6L19 5V20L0 21Z" fill="#fff" />
            <path d="M4 10L9 9.300V13H4ZM10 9.200L15 8.500V13H10ZM4 14H9V18L4 17.500ZM10 14H15V18.600L10 18Z" fill="#1d1f22" />
          </svg>
        </TaskButton>
        <TaskButton aria-label="Amazon">
          <svg width="23" height="23">
            <rect width="23" height="23" fill="#2b3442" />
            <FaAmazon x="3" y="3" size={17} color="#fff" />
          </svg>
        </TaskButton>
        <TaskButton aria-label="TripAdvisor">
          <svg width="23" height="23">
            <rect width="23" height="23" rx="2" fill="#5b9a3f" />
            <path d="M4 7Q11.500 3 19 7" fill="none" stroke="#111" strokeWidth="2" />
            <circle cx="7" cy="12" r="4" fill="#fff" stroke="#111" strokeWidth="1.500" />
            <circle cx="16" cy="12" r="4" fill="#fff" stroke="#111" strokeWidth="1.500" />
            <circle cx="7" cy="12" r="1.500" fill="#c22" />
            <circle cx="16" cy="12" r="1.500" fill="#2a8a2a" />
            <path d="M10 15H13L11.500 18Z" fill="#111" />
          </svg>
        </TaskButton>
        <TaskButton $running aria-label="Control panel">
          <svg width="20" height="15">
            <rect width="20" height="15" rx="1" fill="#6cc5f3" />
            <circle cx="6" cy="7" r="4" fill="#fff" />
            <path d="M6 7V3A4 4 0 0 1 10 7Z" fill="#f39a2b" />
            <path d="M12 4H18M12 7H18M12 10H18" stroke="#1673ad" />
          </svg>
        </TaskButton>
        <TaskButton $active aria-label="CalMAN">
          <svg width="22" height="22">
            <path d="M4 1L20 14L5 21Z" fill="#0a8a14" stroke="#031f05" strokeWidth="1.500" />
            <path d="M12 9H8L7.500 12H10.500Q12 14 10 16H7" fill="none" stroke="#35ff45" strokeWidth="1.500" />
          </svg>
        </TaskButton>
        <TaskButton $running aria-label="Paint">
          <svg width="22" height="22">
            <path d="M10 5C3 5 0 10 1 14C2 17 5 15 6 17C6 20 9 21 13 19C18 17 20 5 10 5Z" fill="#cfe6f5" />
            <circle cx="5" cy="12" r="1.800" fill="#e24848" />
            <circle cx="8" cy="8" r="1.800" fill="#3fae49" />
            <circle cx="13" cy="8" r="1.800" fill="#f2b92c" />
            <path d="M20 2L11 20" stroke="#d98a35" strokeWidth="2" />
            <path d="M21 0L18 5" stroke="#9a6a3c" strokeWidth="4" />
          </svg>
        </TaskButton>
        <Tray>
          <TrayButton aria-label="Help">
            <svg width="30" height="30">
              <circle cx="15" cy="15" r="13.500" fill="#0f97dc" stroke="#fff" strokeWidth="3" />
              <text x="15" y="23" fontSize="24" fontWeight="700" fill="#fff" textAnchor="middle">?</text>
            </svg>
          </TrayButton>
          <TrayButton aria-label="Hidden icons"><Glyph size={14}><path d="M3 13L10 6L17 13" /></Glyph></TrayButton>
          <TrayButton $width={32} aria-label="Battery">
            <Glyph size={16}><path d="M6 6H18V15H4V11M19.300 9V12M1 2V5H6V2M2.500 1V3M4.500 1V3M3.500 5V9" /><path d="M8 8H16V13H8Z" fill="#fff" /></Glyph>
          </TrayButton>
          <TrayButton $width={28} aria-label="Wireless">
            <Glyph size={15}><path d="M2 19A17 17 0 0 1 18 2M6 19A13 13 0 0 1 18 7M10 19A9 9 0 0 1 18 11M14 19A5 5 0 0 1 18 15" strokeWidth="2" /></Glyph>
          </TrayButton>
          <TrayButton $width={30} aria-label="Sound">
            <Glyph size={15}><path d="M1 7H5L9 3V17L5 13H1ZM13 7L19 13M19 7L13 13" /></Glyph>
          </TrayButton>
          <TrayButton $width={32} aria-label="Notifications">
            <Glyph size={17}><path d="M1 2H19V15H13L10 19L7 15H1Z" fill="#fff" /><path d="M4 6H16M4 9H16M4 12H12" stroke="#1d1f22" /></Glyph>
          </TrayButton>
          <TrayButton $width={36} aria-label="Keyboard">
            <svg width="22" height="13" fill="none" stroke="#fff">
              <rect x=".5" y=".5" width="21" height="12" />
              <path d="M3 4H19M3 6.500H19" strokeDasharray="1.500 1" />
              <path d="M6 9.500H16" />
            </svg>
          </TrayButton>
          <Clock>18:11<br />01.08.2016</Clock>
        </Tray>
      </TaskBar>
    </Page>
  );
}
